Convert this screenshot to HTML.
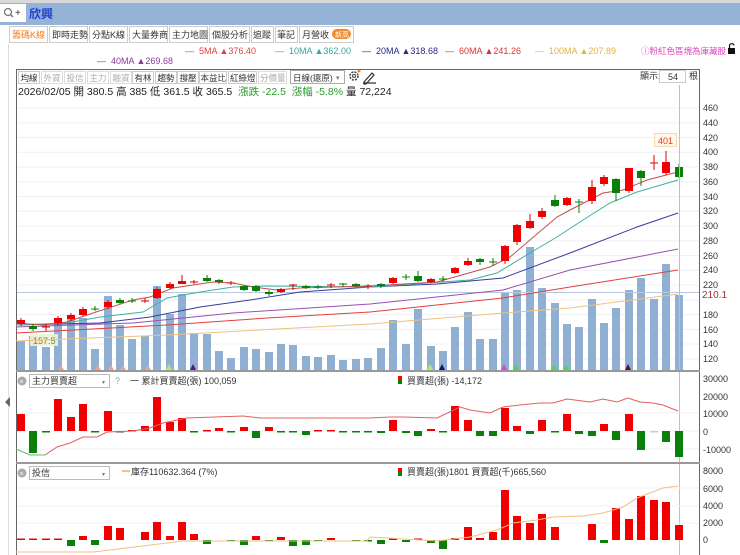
<!DOCTYPE html>
<html><head><meta charset="utf-8"><style>
html,body{margin:0;padding:0;background:#fff;width:740px;height:555px;overflow:hidden;font-family:"Liberation Sans","Noto Sans CJK TC",sans-serif}
svg{position:absolute;left:0;top:0}
text{font-family:"Liberation Sans","Noto Sans CJK TC",sans-serif}
</style></head><body>
<svg width="740" height="555" viewBox="0 0 740 555" xmlns="http://www.w3.org/2000/svg">
<!-- header -->
<rect x="0" y="0" width="740" height="3" fill="#d8d8d8"/>
<rect x="0" y="3" width="740" height="22" fill="#95b3d7"/>
<rect x="0" y="4" width="26" height="18" fill="#fff"/>
<circle cx="8" cy="12" r="3.5" fill="none" stroke="#777" stroke-width="1.3"/>
<line x1="10.5" y1="14.5" x2="13" y2="17" stroke="#777" stroke-width="1.5"/>
<text x="15" y="16" font-size="10" fill="#333">+</text>
<text x="29" y="18" font-size="12" font-weight="bold" fill="#1a3fd0">欣興</text>
<!-- tabs -->
<g font-size="9" fill="#333">
<rect x="9.5" y="26.5" width="38" height="16" fill="#fff" stroke="#ccc"/><text x="12" y="38" fill="#f08020">籌碼K線</text>
<rect x="49.5" y="26.5" width="38" height="16" fill="#fff" stroke="#ccc"/><text x="52" y="38">即時走勢</text>
<rect x="89.5" y="26.5" width="38" height="16" fill="#fff" stroke="#ccc"/><text x="92" y="38">分點K線</text>
<rect x="129.5" y="26.5" width="38" height="16" fill="#fff" stroke="#ccc"/><text x="132" y="38">大量券商</text>
<rect x="169.5" y="26.5" width="38" height="16" fill="#fff" stroke="#ccc"/><text x="172" y="38">主力地圖</text>
<rect x="209.5" y="26.5" width="40" height="16" fill="#fff" stroke="#ccc"/><text x="212" y="38">個股分析</text>
<rect x="251.5" y="26.5" width="22" height="16" fill="#fff" stroke="#ccc"/><text x="253" y="38">追蹤</text>
<rect x="275.5" y="26.5" width="22" height="16" fill="#fff" stroke="#ccc"/><text x="277" y="38">筆記</text>
<rect x="299.5" y="26.5" width="54" height="16" fill="#fff" stroke="#ccc"/><text x="302" y="38">月營收</text>
<rect x="332" y="29" width="19" height="10" rx="5" fill="#f08a2a"/><text x="335" y="37" font-size="7" fill="#fff">新高</text>
</g>
<!-- legend -->
<g font-size="9">
<text x="185" y="54" fill="#e04040">—&#160;&#160;5MA ▲376.40</text>
<text x="275" y="54" fill="#3aa59a">—&#160;&#160;10MA ▲362.00</text>
<text x="362" y="54" fill="#2a2a80">—&#160;&#160;20MA ▲318.68</text>
<text x="445" y="54" fill="#e03030">—&#160;&#160;60MA ▲241.26</text>
<text x="535" y="54" fill="#e8b040">—&#160;&#160;100MA ▲207.89</text>
<text x="97" y="64" fill="#8a3a9a">—&#160;&#160;40MA ▲269.68</text>
<text x="641" y="54" font-size="8.5" fill="#e040c0">ⓘ粉紅色區塊為庫藏股</text>
</g>
<rect x="728" y="48" width="7" height="6" fill="#111"/><path d="M729.5 48v-2.5a2.3 2.3 0 0 1 4.5 0" fill="none" stroke="#111" stroke-width="1.2"/>
<!-- frame -->
<line x1="8.5" y1="44" x2="8.5" y2="555" stroke="#ddd"/>
<path d="M16.5 555V69.5H699.5V555" fill="none" stroke="#666"/>
<polygon points="5,402 10,397 10,407" fill="#666"/>
<!-- toolbar -->
<g font-size="8.5" fill="#333">
<rect x="18.5" y="71.5" width="21" height="12" fill="#fff" stroke="#ccc"/><text x="20.5" y="81">均線</text>
<rect x="41.5" y="71.5" width="21" height="12" fill="#fff" stroke="#ddd"/><text x="43.5" y="81" fill="#aaa">外資</text>
<rect x="64.5" y="71.5" width="21" height="12" fill="#fff" stroke="#ddd"/><text x="66.5" y="81" fill="#aaa">投信</text>
<rect x="87.5" y="71.5" width="21" height="12" fill="#fff" stroke="#ddd"/><text x="89.5" y="81" fill="#aaa">主力</text>
<rect x="110.5" y="71.5" width="21" height="12" fill="#fff" stroke="#ddd"/><text x="112.5" y="81" fill="#aaa">融資</text>
<rect x="132.5" y="71.5" width="21" height="12" fill="#fff" stroke="#ccc"/><text x="134.5" y="81">有林</text>
<rect x="155.5" y="71.5" width="21" height="12" fill="#fff" stroke="#ccc"/><text x="157.5" y="81">趨勢</text>
<rect x="177.5" y="71.5" width="21" height="12" fill="#fff" stroke="#ccc"/><text x="179.5" y="81">撐壓</text>
<rect x="199.5" y="71.5" width="27" height="12" fill="#fff" stroke="#ccc"/><text x="200.5" y="81">本益比</text>
<rect x="228.5" y="71.5" width="28" height="12" fill="#fff" stroke="#ccc"/><text x="230" y="81">紅綠燈</text>
<rect x="258.5" y="71.5" width="28" height="12" fill="#fff" stroke="#ddd"/><text x="260" y="81" fill="#aaa">分價量</text>
<rect x="290.5" y="70.5" width="54" height="13" fill="#fff" stroke="#aaa"/><text x="293" y="81">日線(還原)</text><text x="336" y="80" font-size="7" fill="#777">▾</text>
</g>
<circle cx="354" cy="76" r="4" fill="none" stroke="#444" stroke-width="1.6" stroke-dasharray="2 1.2"/><circle cx="354" cy="76" r="1.5" fill="none" stroke="#444"/><circle cx="359" cy="71" r="1.5" fill="#f08020"/>
<path d="M364 82l8-9 2 2-8 9h-2z M363 83h13" fill="none" stroke="#333" stroke-width="1.2"/>
<text x="640" y="79" font-size="9" fill="#333">顯示:</text>
<rect x="659.5" y="70.5" width="26" height="12" fill="#fff" stroke="#ccc"/><text x="668" y="80" font-size="9" fill="#333">54</text>
<text x="689" y="79" font-size="9" fill="#333">根</text>
<!-- date line -->
<text x="18" y="95" font-size="10.5" fill="#222">2026/02/05 開 380.5 高 385 低 361.5 收 365.5 <tspan fill="#2a9a2a">&#160;漲跌 -22.5&#160; 漲幅 -5.8%</tspan> 量 72,224</text>
<!-- grid -->
<g stroke="#eef0f4" stroke-width="1">
<line x1="17" y1="108" x2="699" y2="108"/><line x1="17" y1="122.8" x2="699" y2="122.8"/><line x1="17" y1="137.5" x2="699" y2="137.5"/><line x1="17" y1="152.3" x2="699" y2="152.3"/><line x1="17" y1="167" x2="699" y2="167"/><line x1="17" y1="181.8" x2="699" y2="181.8"/><line x1="17" y1="196.6" x2="699" y2="196.6"/><line x1="17" y1="211.3" x2="699" y2="211.3"/><line x1="17" y1="226" x2="699" y2="226"/><line x1="17" y1="240.8" x2="699" y2="240.8"/><line x1="17" y1="255.6" x2="699" y2="255.6"/><line x1="17" y1="270.4" x2="699" y2="270.4"/><line x1="17" y1="285" x2="699" y2="285"/><line x1="17" y1="300" x2="699" y2="300"/><line x1="17" y1="314.6" x2="699" y2="314.6"/><line x1="17" y1="329.4" x2="699" y2="329.4"/><line x1="17" y1="344" x2="699" y2="344"/><line x1="17" y1="359" x2="699" y2="359"/>
</g>
<g font-size="9" fill="#333">
<text x="703" y="111">460</text><text x="703" y="126">440</text><text x="703" y="141">420</text><text x="703" y="155">400</text><text x="703" y="170">380</text><text x="703" y="185">360</text><text x="703" y="200">340</text><text x="703" y="214">320</text><text x="703" y="229">300</text><text x="703" y="244">280</text><text x="703" y="259">260</text><text x="703" y="273">240</text><text x="703" y="288">220</text><text x="703" y="318">180</text><text x="703" y="333">160</text><text x="703" y="347">140</text><text x="703" y="362">120</text>
</g>
<!-- volume -->
<g fill="#8fb0d3">
<rect x="17" y="341" width="8" height="29"/><rect x="29" y="336" width="8" height="34"/><rect x="42" y="347" width="8" height="23"/><rect x="54" y="323" width="8" height="47"/><rect x="67" y="319" width="8" height="51"/><rect x="79" y="318" width="8" height="52"/><rect x="91" y="349" width="8" height="21"/><rect x="104" y="296" width="8" height="74"/><rect x="116" y="325" width="8" height="45"/><rect x="128" y="339" width="8" height="31"/><rect x="141" y="336" width="8" height="34"/><rect x="153" y="286" width="8" height="84"/><rect x="166" y="314" width="8" height="56"/><rect x="178" y="294" width="8" height="76"/><rect x="190" y="333" width="8" height="37"/><rect x="203" y="334" width="8" height="36"/><rect x="215" y="351" width="8" height="19"/><rect x="227" y="358" width="8" height="12"/><rect x="240" y="347" width="8" height="23"/><rect x="252" y="349" width="8" height="21"/><rect x="265" y="352" width="8" height="18"/><rect x="277" y="344" width="8" height="26"/><rect x="289" y="345" width="8" height="25"/><rect x="302" y="356" width="8" height="14"/><rect x="314" y="357" width="8" height="13"/><rect x="327" y="355" width="8" height="15"/><rect x="339" y="360" width="8" height="10"/><rect x="352" y="359" width="8" height="11"/><rect x="364" y="358" width="8" height="12"/><rect x="377" y="348" width="8" height="22"/><rect x="389" y="320" width="8" height="50"/><rect x="402" y="344" width="8" height="26"/><rect x="414" y="309" width="8" height="61"/><rect x="427" y="346" width="8" height="24"/><rect x="439" y="351" width="8" height="19"/><rect x="451" y="327" width="8" height="43"/><rect x="464" y="312" width="8" height="58"/><rect x="476" y="339" width="8" height="31"/><rect x="489" y="339" width="8" height="31"/><rect x="501" y="293" width="8" height="77"/><rect x="513" y="290" width="8" height="80"/><rect x="526" y="247" width="8" height="123"/><rect x="538" y="288" width="8" height="82"/><rect x="551" y="303" width="8" height="67"/><rect x="563" y="324" width="8" height="46"/><rect x="575" y="327" width="8" height="43"/><rect x="588" y="299" width="8" height="71"/><rect x="600" y="323" width="8" height="47"/><rect x="612" y="308" width="8" height="62"/><rect x="625" y="290" width="8" height="80"/><rect x="637" y="278" width="8" height="92"/><rect x="650" y="299" width="8" height="71"/><rect x="662" y="264" width="8" height="106"/><rect x="675" y="295" width="8" height="75"/>
</g>
<!-- markers -->
<g>
<polygon points="58,370 61,365 64,370" fill="#f4a090"/><polygon points="95,370 98,365 101,370" fill="#f4a090"/><polygon points="108,370 111,365 114,370" fill="#f4a090"/><polygon points="120,370 123,365 126,370" fill="#f4a090"/><polygon points="145,370 148,365 151,370" fill="#f4a090"/><polygon points="166,370 169,364 172,370" fill="#b0f060"/><polygon points="190,370 193,364 196,370" fill="#4a1a80"/><polygon points="427,370 430,364 433,370" fill="#b0f060"/><polygon points="439,370 442,364 445,370" fill="#101080"/><polygon points="501,370 504,364 507,370" fill="#e040e0"/><polygon points="513,370 516,364 519,370" fill="#40e040"/><polygon points="551,370 554,364 557,370" fill="#40e040"/><polygon points="563,370 566,364 569,370" fill="#40e040"/><polygon points="625,370 628,364 631,370" fill="#601020"/>
</g>
<!-- horizontal ref line & labels -->
<line x1="17" y1="292.5" x2="699" y2="292.5" stroke="#b8c8e0"/>
<text x="702" y="298" font-size="10" fill="#a03030">210.1</text>
<rect x="30" y="334" width="28" height="12" fill="#eef2d8" opacity="0.9"/><text x="33" y="344" font-size="9" fill="#7a8a20">157.5</text>
<!-- MAs -->
<g fill="none" stroke-width="1">
<polyline stroke="#f0c080" points="16,341 167,335 370,324 503,313 570,308 678,294"/>
<polyline stroke="#e04040" points="16,333 167,325 267,318 370,312 503,298 570,287 678,270"/>
<polyline stroke="#9a50b0" points="16,327 133,323 233,313 370,304 503,290 570,270 637,257 678,249"/>
<polyline stroke="#3a3aa0" points="16,325 100,323 150,317 200,307 250,300 300,292 370,287 437,284 503,278 570,253 637,227 678,213"/>
<polyline stroke="#40b0a0" points="16,325 67,323 100,317 143,312 167,298 200,292 233,287 267,286 370,287 470,280 497,273 530,253 557,237 583,220 610,203 637,192 678,180"/>
<polyline stroke="#c05050" points="16,323 43,325 67,322 93,313 133,300 150,297 173,288 213,282 233,283 253,287 277,290 300,288 333,287 370,286 437,282 490,267 510,257 530,240 557,217 570,210 603,193 623,190 647,180 678,172"/>
</g>
<!-- candles red -->
<g fill="#f00000" stroke="#e00000" stroke-width="1">
<line x1="21" y1="318" x2="21" y2="326"/><line x1="58" y1="316" x2="58" y2="325"/><line x1="71" y1="313" x2="71" y2="321"/><line x1="83" y1="307" x2="83" y2="316"/><line x1="108" y1="300" x2="108" y2="309"/><line x1="157" y1="287" x2="157" y2="299"/><line x1="170" y1="282" x2="170" y2="289"/><line x1="182" y1="275" x2="182" y2="284"/><line x1="281" y1="288" x2="281" y2="293"/><line x1="393" y1="277" x2="393" y2="284"/><line x1="431" y1="278" x2="431" y2="283"/><line x1="455" y1="267" x2="455" y2="274"/><line x1="468" y1="258" x2="468" y2="266"/><line x1="505" y1="245" x2="505" y2="264"/><line x1="517" y1="224" x2="517" y2="245"/><line x1="530" y1="214" x2="530" y2="229"/><line x1="542" y1="208" x2="542" y2="219"/><line x1="567" y1="197" x2="567" y2="206"/><line x1="592" y1="180" x2="592" y2="204"/><line x1="604" y1="175" x2="604" y2="186"/><line x1="629" y1="168" x2="629" y2="193"/><line x1="666" y1="151" x2="666" y2="175"/>
<line x1="46" y1="324" x2="46" y2="331"/><line x1="42" y1="327" x2="50" y2="327"/>
<line x1="145" y1="298" x2="145" y2="303"/><line x1="141" y1="301" x2="149" y2="301"/>
<line x1="194" y1="280" x2="194" y2="284"/><line x1="190" y1="282" x2="198" y2="282"/>
<line x1="231" y1="281" x2="231" y2="285"/><line x1="227" y1="283" x2="235" y2="283"/>
<line x1="293" y1="284" x2="293" y2="290"/><line x1="289" y1="285" x2="297" y2="285"/>
<line x1="331" y1="283" x2="331" y2="288"/><line x1="327" y1="285" x2="335" y2="285"/>
<line x1="368" y1="284" x2="368" y2="289"/><line x1="364" y1="286" x2="372" y2="286"/>
<line x1="654" y1="155" x2="654" y2="170"/><line x1="650" y1="163" x2="658" y2="163"/>
</g>
<g fill="#f00000">
<rect x="17" y="320" width="8" height="4"/><rect x="54" y="318" width="8" height="5"/><rect x="67" y="315" width="8" height="4"/><rect x="79" y="309" width="8" height="6"/><rect x="104" y="302" width="8" height="5"/><rect x="153" y="289" width="8" height="9"/><rect x="166" y="284" width="8" height="4"/><rect x="178" y="281" width="8" height="3"/><rect x="277" y="289" width="8" height="3"/><rect x="389" y="278" width="8" height="5"/><rect x="427" y="279" width="8" height="3"/><rect x="451" y="268" width="8" height="5"/><rect x="464" y="261" width="8" height="4"/><rect x="501" y="246" width="8" height="15"/><rect x="513" y="225" width="8" height="17"/><rect x="526" y="221" width="8" height="7"/><rect x="538" y="211" width="8" height="6"/><rect x="563" y="198" width="8" height="7"/><rect x="588" y="187" width="8" height="14"/><rect x="600" y="177" width="8" height="7"/><rect x="625" y="168" width="8" height="23"/><rect x="662" y="162" width="8" height="11"/>
</g>
<g stroke="#0a800a" stroke-width="1">
<line x1="33" y1="324" x2="33" y2="331"/><line x1="120" y1="298" x2="120" y2="304"/><line x1="207" y1="275" x2="207" y2="282"/><line x1="219" y1="279" x2="219" y2="284"/><line x1="244" y1="285" x2="244" y2="291"/><line x1="256" y1="285" x2="256" y2="292"/><line x1="269" y1="290" x2="269" y2="296"/><line x1="306" y1="285" x2="306" y2="289"/><line x1="356" y1="283" x2="356" y2="287"/><line x1="381" y1="283" x2="381" y2="288"/><line x1="418" y1="271" x2="418" y2="282"/><line x1="480" y1="258" x2="480" y2="265"/><line x1="555" y1="195" x2="555" y2="207"/><line x1="616" y1="178" x2="616" y2="201"/><line x1="641" y1="170" x2="641" y2="186"/><line x1="679" y1="164" x2="679" y2="178"/>
<line x1="95" y1="306" x2="95" y2="311"/><line x1="91" y1="309" x2="99" y2="309"/>
<line x1="132" y1="298" x2="132" y2="303"/><line x1="128" y1="301" x2="136" y2="301"/>
<line x1="318" y1="285" x2="318" y2="289"/><line x1="314" y1="287" x2="322" y2="287"/>
<line x1="343" y1="283" x2="343" y2="287"/><line x1="339" y1="284" x2="347" y2="284"/>
<line x1="406" y1="274" x2="406" y2="280"/><line x1="402" y1="277" x2="410" y2="277"/>
<line x1="443" y1="276" x2="443" y2="282"/><line x1="439" y1="279" x2="447" y2="279"/>
<line x1="493" y1="258" x2="493" y2="266"/><line x1="489" y1="262" x2="497" y2="262"/>
<line x1="579" y1="199" x2="579" y2="213"/><line x1="575" y1="202" x2="583" y2="202"/>
</g>
<g fill="#0a800a">
<rect x="29" y="326" width="8" height="3"/><rect x="116" y="300" width="8" height="3"/><rect x="203" y="278" width="8" height="3"/><rect x="215" y="280" width="8" height="2"/><rect x="240" y="286" width="8" height="4"/><rect x="252" y="286" width="8" height="5"/><rect x="265" y="292" width="8" height="2"/><rect x="302" y="286" width="8" height="2"/><rect x="352" y="284" width="8" height="2"/><rect x="377" y="284" width="8" height="2"/><rect x="414" y="276" width="8" height="5"/><rect x="476" y="259" width="8" height="3"/><rect x="551" y="200" width="8" height="6"/><rect x="612" y="179" width="8" height="14"/><rect x="637" y="171" width="8" height="7"/><rect x="675" y="167" width="8" height="10"/>
</g>
<rect x="654.5" y="133.5" width="22" height="13" fill="#fff8e6" stroke="#f0dcb0"/><text x="658" y="144" font-size="9" fill="#e04030">401</text>
<!-- crosshair vertical -->
<line x1="679.5" y1="85" x2="679.5" y2="555" stroke="#a8c4e6"/>
<!-- panel separators -->
<rect x="16" y="370" width="684" height="2" fill="#999"/>
<rect x="16" y="462" width="684" height="2" fill="#999"/>
<!-- panel 2 -->
<circle cx="22" cy="381" r="4.5" fill="#aaa"/><text x="19.5" y="384" font-size="7" fill="#fff">×</text>
<rect x="29.5" y="374.5" width="80" height="13" fill="#fff" stroke="#bbb"/><text x="32" y="384" font-size="9" fill="#333">主力買賣超</text><text x="102" y="384" font-size="6" fill="#777">▾</text>
<text x="115" y="384" font-size="9" fill="#8ab">?</text>
<text x="130" y="384" font-size="9" fill="#333">一 累計買賣超(張) 100,059</text>
<rect x="398" y="376" width="4" height="4" fill="#f00"/><rect x="398" y="380" width="4" height="4" fill="#0a800a"/>
<text x="407" y="384" font-size="9" fill="#333">買賣超(張) -14,172</text>
<g stroke="#eef0f4"><line x1="17" y1="413" x2="699" y2="413"/><line x1="17" y1="449" x2="699" y2="449"/><line x1="17" y1="431" x2="699" y2="431"/></g>
<g font-size="9" fill="#333"><text x="703" y="382">30000</text><text x="703" y="400">20000</text><text x="703" y="417">10000</text><text x="703" y="435">0</text><text x="703" y="453">-10000</text></g>
<g fill="#f00000">
<rect x="17" y="414" width="8" height="17"/><rect x="54" y="399" width="8" height="32"/><rect x="67" y="417" width="8" height="14"/><rect x="79" y="404" width="8" height="27"/><rect x="104" y="411" width="8" height="20"/><rect x="128" y="430" width="8" height="1.5"/><rect x="141" y="426" width="8" height="5"/><rect x="153" y="397" width="8" height="34"/><rect x="166" y="422" width="8" height="9"/><rect x="178" y="418" width="8" height="13"/><rect x="203" y="430" width="8" height="1.5"/><rect x="215" y="428" width="8" height="3"/><rect x="240" y="427" width="8" height="4"/><rect x="265" y="427" width="8" height="4"/><rect x="314" y="430" width="8" height="1.5"/><rect x="327" y="430" width="8" height="1.5"/><rect x="389" y="420" width="8" height="11"/><rect x="427" y="429" width="8" height="2"/><rect x="451" y="406" width="8" height="25"/><rect x="464" y="420" width="8" height="11"/><rect x="501" y="408" width="8" height="23"/><rect x="513" y="426" width="8" height="5"/><rect x="538" y="420" width="8" height="11"/><rect x="563" y="414" width="8" height="17"/><rect x="600" y="424" width="8" height="7"/><rect x="625" y="414" width="8" height="17"/>
</g>
<g fill="#0a800a">
<rect x="29" y="431" width="8" height="22"/><rect x="42" y="431" width="8" height="1.5"/><rect x="91" y="431" width="8" height="1.5"/><rect x="116" y="431" width="8" height="1.5" fill="#444"/><rect x="190" y="431" width="8" height="1.5"/><rect x="227" y="431" width="8" height="1.5"/><rect x="252" y="431" width="8" height="7"/><rect x="277" y="431" width="8" height="1.5"/><rect x="289" y="431" width="8" height="1.5"/><rect x="302" y="431" width="8" height="4"/><rect x="339" y="431" width="8" height="1.5"/><rect x="352" y="431" width="8" height="1.5"/><rect x="364" y="431" width="8" height="1.5"/><rect x="377" y="431" width="8" height="2"/><rect x="402" y="431" width="8" height="2"/><rect x="414" y="431" width="8" height="5"/><rect x="439" y="431" width="8" height="1.5"/><rect x="476" y="431" width="8" height="5"/><rect x="489" y="431" width="8" height="5"/><rect x="526" y="431" width="8" height="3"/><rect x="551" y="431" width="8" height="1.5"/><rect x="575" y="431" width="8" height="3"/><rect x="588" y="431" width="8" height="5"/><rect x="612" y="431" width="8" height="9"/><rect x="637" y="431" width="8" height="19"/><rect x="650" y="431" width="8" height="1.5" fill="#ccc"/><rect x="662" y="431" width="8" height="11"/><rect x="675" y="431" width="8" height="26"/>
</g>
<polyline fill="none" stroke="#60c060" points="16,449 30,455 45,455"/>
<polyline fill="none" stroke="#e06060" points="45,455 57,447 70,443 83,437 97,437 107,432 133,431 150,428 163,423 187,418 243,416 260,418 370,418 390,417 403,417 437,418 460,407 470,410 490,413 503,407 520,405 540,403 553,403 567,399 590,402 603,399 617,402 628,398 640,402 653,403 663,405 678,411"/>
<!-- panel 3 -->
<circle cx="22" cy="473" r="4.5" fill="#aaa"/><text x="19.5" y="476" font-size="7" fill="#fff">×</text>
<rect x="29.5" y="466.5" width="80" height="13" fill="#fff" stroke="#bbb"/><text x="32" y="476" font-size="9" fill="#333">投信</text><text x="102" y="476" font-size="6" fill="#777">▾</text>
<line x1="122" y1="471" x2="130" y2="471" stroke="#f0b040" stroke-width="1.5"/>
<text x="131" y="475" font-size="9" fill="#333">庫存110632.364 (7%)</text>
<rect x="398" y="468" width="4" height="4" fill="#f00"/><rect x="398" y="472" width="4" height="4" fill="#0a800a"/>
<text x="407" y="475" font-size="9" fill="#333">買賣超(張)1801 買賣超(千)665,560</text>
<g stroke="#eef0f4"><line x1="17" y1="506" x2="699" y2="506"/><line x1="17" y1="488" x2="699" y2="488"/><line x1="17" y1="523" x2="699" y2="523"/></g>
<g font-size="9" fill="#333"><text x="703" y="474">8000</text><text x="703" y="492">6000</text><text x="703" y="509">4000</text><text x="703" y="526">2000</text><text x="703" y="543">0</text></g>
<g fill="#f00000">
<rect x="17" y="538.5" width="8" height="1.5"/><rect x="29" y="538.5" width="8" height="1.5"/><rect x="42" y="538.5" width="8" height="1.5"/><rect x="54" y="538.5" width="8" height="1.5"/><rect x="79" y="536" width="8" height="4"/><rect x="104" y="526" width="8" height="14"/><rect x="116" y="528" width="8" height="12"/><rect x="141" y="532" width="8" height="8"/><rect x="153" y="522" width="8" height="18"/><rect x="166" y="536" width="8" height="4"/><rect x="178" y="522" width="8" height="18"/><rect x="190" y="534" width="8" height="6"/><rect x="252" y="536" width="8" height="4"/><rect x="277" y="537" width="8" height="3"/><rect x="327" y="538" width="8" height="2"/><rect x="389" y="538" width="8" height="2"/><rect x="414" y="538.5" width="8" height="1.5"/><rect x="451" y="538" width="8" height="2"/><rect x="464" y="527" width="8" height="13"/><rect x="476" y="538" width="8" height="2"/><rect x="489" y="532" width="8" height="8"/><rect x="501" y="490" width="8" height="50"/><rect x="513" y="516" width="8" height="24"/><rect x="526" y="523" width="8" height="17"/><rect x="538" y="514" width="8" height="26"/><rect x="551" y="527" width="8" height="13"/><rect x="588" y="524" width="8" height="16"/><rect x="612" y="508" width="8" height="32"/><rect x="625" y="519" width="8" height="21"/><rect x="637" y="496" width="8" height="44"/><rect x="650" y="500" width="8" height="40"/><rect x="662" y="502" width="8" height="38"/><rect x="675" y="525" width="8" height="15"/>
</g>
<g fill="#0a800a">
<rect x="67" y="540" width="8" height="6"/><rect x="91" y="540" width="8" height="5"/><rect x="203" y="540" width="8" height="4"/><rect x="227" y="540" width="8" height="1.5"/><rect x="240" y="540" width="8" height="5"/><rect x="265" y="540" width="8" height="1.5"/><rect x="289" y="540" width="8" height="6"/><rect x="302" y="540" width="8" height="5"/><rect x="314" y="540" width="8" height="1.5"/><rect x="352" y="540" width="8" height="1.5"/><rect x="364" y="540" width="8" height="1.5"/><rect x="377" y="540" width="8" height="4"/><rect x="402" y="540" width="8" height="2"/><rect x="427" y="540" width="8" height="3"/><rect x="439" y="540" width="8" height="9"/><rect x="600" y="540" width="8" height="3"/>
</g>
<polyline fill="none" stroke="#f0c080" points="16,552 93,552 110,550 167,543 183,541 367,541 370,537 437,541 470,537 497,530 513,523 537,520 553,517 583,516 603,513 623,507 637,498 663,488 678,486"/>
</svg>
</body></html>
